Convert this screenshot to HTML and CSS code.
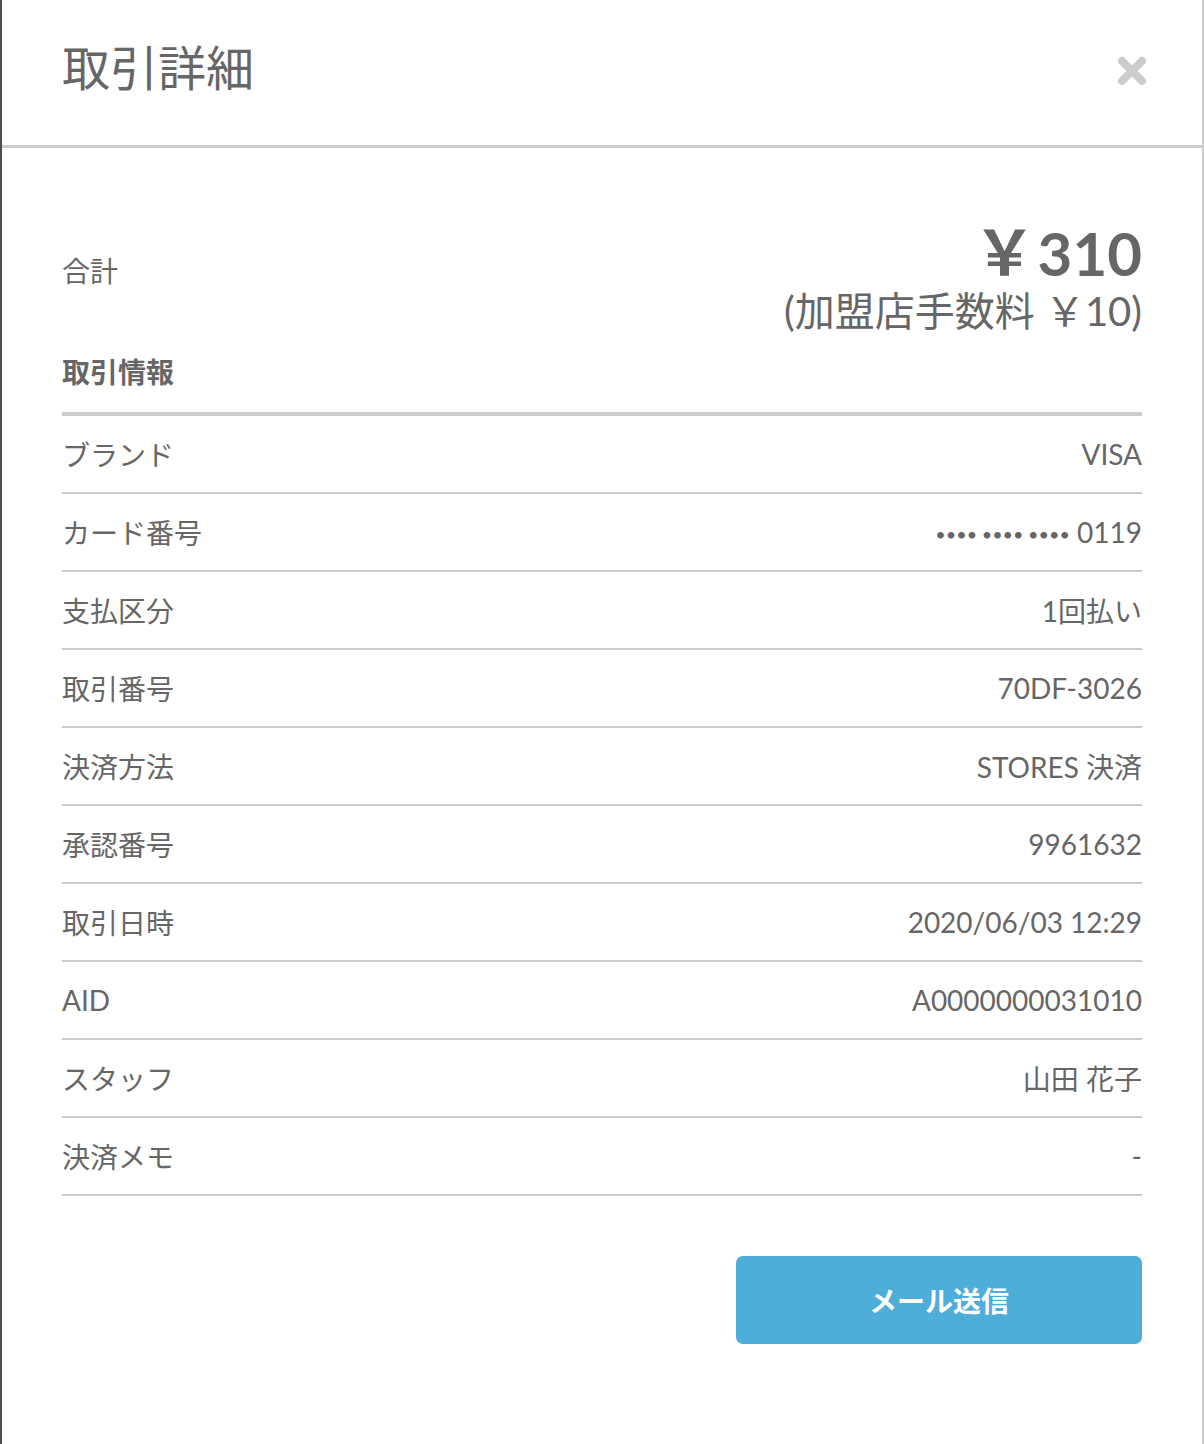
FILE: index.html
```html
<!DOCTYPE html>
<html lang="ja">
<head>
<meta charset="utf-8">
<title>取引詳細</title>
<link rel="stylesheet" href="styles.css">
</head>
<body>
<div class="modal">
  <header class="modal-header">
    <h1 class="modal-title">取引詳細</h1>
    <button class="close" aria-label="閉じる">
      <svg width="32" height="32" viewBox="0 0 32 32"><path d="M6 6 L26 26 M26 6 L6 26" stroke="#cccccc" stroke-width="8" stroke-linecap="round" fill="none"/></svg>
    </button>
  </header>
  <main class="modal-body">
    <div class="total">
      <div class="total-label">合計</div>
      <div class="total-amount">
        <div class="amount"><span class="yen">￥</span>310</div>
        <div class="fee">(加盟店手数料 ￥10)</div>
      </div>
    </div>
    <h2 class="section-title">取引情報</h2>
    <dl class="info">
      <div class="row"><dt>ブランド</dt><dd>VISA</dd></div>
      <div class="row"><dt>カード番号</dt><dd><span class="dots">•••• •••• ••••</span> 0119</dd></div>
      <div class="row"><dt>支払区分</dt><dd>1回払い</dd></div>
      <div class="row"><dt>取引番号</dt><dd>70DF-3026</dd></div>
      <div class="row"><dt>決済方法</dt><dd>STORES 決済</dd></div>
      <div class="row"><dt>承認番号</dt><dd>9961632</dd></div>
      <div class="row"><dt>取引日時</dt><dd>2020/06/03 12:29</dd></div>
      <div class="row"><dt>AID</dt><dd>A0000000031010</dd></div>
      <div class="row"><dt>スタッフ</dt><dd>山田 花子</dd></div>
      <div class="row"><dt>決済メモ</dt><dd>-</dd></div>
    </dl>
    <div class="actions">
      <button class="send">メール送信</button>
    </div>
  </main>
</div>
</body>
</html>
```
FILE: styles.css
```css
html, body {
  margin: 0;
  padding: 0;
  background: #ffffff;
}
body {
  font-family: Lato, "Noto Sans CJK JP", sans-serif;
  color: #666666;
}
.modal {
  box-sizing: border-box;
  min-height: 1444px;
  border-left: 2px solid #4d4d4d;
  border-right: 2px solid #cccccc;
  background: #ffffff;
}
.modal-header {
  height: 145px;
  border-bottom: 3px solid #cccccc;
  display: flex;
  align-items: center;
  justify-content: space-between;
  padding: 0 54px 0 60px;
}
.modal-title {
  margin: 0;
  font-family: "Noto Sans CJK JP", sans-serif;
  font-size: 48px;
  font-weight: 400;
  color: #666666;
  line-height: 1;
  position: relative;
  top: -8px;
}
.close {
  border: 0;
  background: none;
  padding: 0;
  width: 32px;
  height: 32px;
  display: flex;
  align-items: center;
  justify-content: center;
  cursor: pointer;
  position: relative;
  top: -2px;
}
.modal-body {
  padding: 66px 60px 60px;
}
.total {
  display: flex;
  justify-content: space-between;
  align-items: center;
}
.total-label {
  font-size: 28px;
  position: relative;
  top: -4px;
}
.total-amount {
  text-align: right;
}
.amount {
  font-size: 60px;
  font-weight: 700;
  line-height: 77px;
}
.yen {
  font-size: 62px;
  margin-right: 2px;
}
.fee {
  font-size: 40px;
  line-height: 42px;
  position: relative;
  top: -2px;
}
.section-title {
  margin: 17px 0 0;
  font-size: 28px;
  font-weight: 700;
  line-height: 42px;
  padding-bottom: 19px;
  border-bottom: 4px solid #cccccc;
  color: #666666;
}
.info {
  margin: 0;
}
.row {
  display: flex;
  justify-content: space-between;
  align-items: center;
  height: 76px;
  border-bottom: 2px solid #cccccc;
  font-size: 28px;
}
.row dt, .row dd {
  margin: 0;
}
.dots {
  font-size: 18px;
  position: relative;
  top: -2px;
}
.actions {
  display: flex;
  justify-content: flex-end;
  margin-top: 60px;
}
.send {
  width: 406px;
  height: 88px;
  border: 0;
  border-radius: 7px;
  background: #4fadd9;
  color: #ffffff;
  font-family: "Noto Sans CJK JP", sans-serif;
  font-size: 28px;
  font-weight: 700;
  cursor: pointer;
}
```
